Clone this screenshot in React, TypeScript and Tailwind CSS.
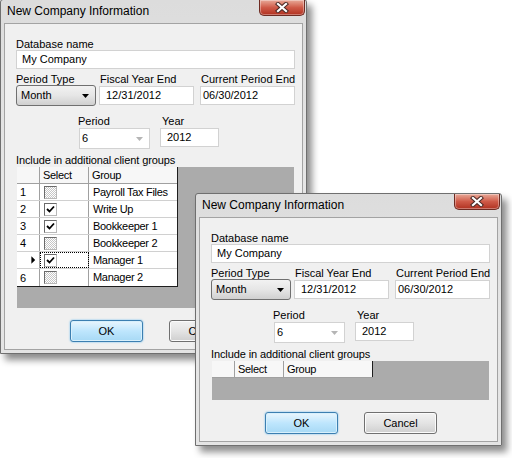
import React from "react";

type Row = { n: string; checked: boolean; group: string; current?: boolean };

const rows: Row[] = [
  { n: "1", checked: false, group: "Payroll Tax Files" },
  { n: "2", checked: true, group: "Write Up" },
  { n: "3", checked: true, group: "Bookkeeper 1" },
  { n: "4", checked: false, group: "Bookkeeper 2" },
  { n: "", checked: true, group: "Manager 1", current: true },
  { n: "6", checked: false, group: "Manager 2" },
];

function CloseButton() {
  return (
    <div className="w-[46px] h-[16px] rounded-b-[5px] border border-t-0 border-[#6e2b22] bg-gradient-to-b from-[#e7a999] via-[#cf5a48] to-[#b0301f] flex items-center justify-center shadow-[inset_0_0_0_1px_rgba(255,255,255,0.35)]">
      <svg width="14" height="11" viewBox="0 0 14 11">
        <path d="M3 2 L11 9 M11 2 L3 9" stroke="#4a2a26" strokeWidth="4.2" strokeLinecap="square" />
        <path d="M3 2 L11 9 M11 2 L3 9" stroke="#ffffff" strokeWidth="2.2" strokeLinecap="square" />
      </svg>
    </div>
  );
}

function Checkbox({ checked }: { checked: boolean }) {
  return (
    <div
      className={
        "w-[13px] h-[13px] border border-t-[#6a6a6a] border-l-[#6a6a6a] border-b-[#b8b8b8] border-r-[#b8b8b8] flex items-center justify-center " +
        (checked
          ? "bg-white"
          : "bg-[repeating-conic-gradient(#c6c6c6_0_25%,#ffffff_0_50%)] bg-[length:2px_2px]")
      }
    >
      {checked && (
        <svg width="9" height="9" viewBox="0 0 9 9">
          <path d="M1 4 L3.5 6.5 L8 1.5" stroke="#000" strokeWidth="1.8" fill="none" />
        </svg>
      )}
    </div>
  );
}

function TextBox({ w, pl, value }: { w: string; pl: string; value: string }) {
  return (
    <div className={`${w} ${pl} h-[19px] bg-white border border-[#d2d2d2] flex items-center text-black whitespace-nowrap`}>
      {value}
    </div>
  );
}

function Grid({ tall }: { tall: boolean }) {
  return (
    <div className={`mt-px ml-px w-[277px] bg-[#ababab] ${tall ? "h-[141px]" : "h-[39px]"}`}>
      <div className={`w-[161px] whitespace-nowrap tracking-[-0.3px] ${tall ? "border-r border-b border-[#1e1e1e]" : ""}`}>
        <div className="flex h-[17px] bg-[#f7f7f7] border-b border-[#a0a0a0]">
          <div className="w-[23px] border-r border-[#a0a0a0]" />
          <div className="w-[49px] border-r border-[#a0a0a0] pl-[3px] leading-[16px]">Select</div>
          <div className={`flex-1 pl-[3px] leading-[16px] ${tall ? "" : "border-r border-[#1e1e1e]"}`}>Group</div>
        </div>
        {tall &&
          rows.map((r, i) => (
            <div key={i} className="flex h-[17px] bg-white border-b border-[#d0d0d0] last:border-b-0">
              <div className="w-[23px] border-r border-[#a0a0a0] pl-[3px] leading-[16px] flex items-center">
                {r.current ? (
                  <svg width="20" height="16" viewBox="0 0 20 16">
                    <path d="M12 4 L16 8 L12 12 Z" fill="#000" />
                  </svg>
                ) : (
                  r.n
                )}
              </div>
              <div
                className={`w-[49px] border-r border-[#a0a0a0] pl-[4px] flex items-center ${
                  r.current ? "outline outline-1 outline-dotted outline-black -outline-offset-1" : ""
                }`}
              >
                <Checkbox checked={r.checked} />
              </div>
              <div className="flex-1 pl-[4px] leading-[16px]">{r.group}</div>
            </div>
          ))}
      </div>
    </div>
  );
}

function Button({ label, primary }: { label: string; primary?: boolean }) {
  return (
    <div
      className={
        "w-[73px] h-[22px] rounded-[3px] flex items-center justify-center text-black border " +
        (primary
          ? "border-[#3c7fb1] bg-gradient-to-b from-[#eaf6fd] via-[#bee6fd] to-[#a7d9f5] shadow-[0_0_2px_#5fb8ee,inset_0_0_0_1px_#d8f0fc]"
          : "border-[#707070] bg-gradient-to-b from-[#f2f2f2] via-[#e4e4e4] to-[#cfcfcf] shadow-[inset_0_0_0_1px_#fbfbfb]")
      }
    >
      {label}
    </div>
  );
}

function CompanyWindow({ className, tall }: { className: string; tall: boolean }) {
  return (
    <div
      className={`absolute w-[307px] border border-[#6f6f6f] rounded-t-[3px] bg-gradient-to-b from-[#dcdcdc] via-[#e6e6e6] to-[#e4e4e4] shadow-[5px_6px_7px_rgba(0,0,0,0.45)] ${className}`}
    >
      <div className="h-[23px] flex justify-between items-start pl-[6px] pr-px">
        <div className="pt-[4px] text-[12px] leading-[14px] text-black whitespace-nowrap">New Company Information</div>
        <CloseButton />
      </div>
      <div className="mx-[3px] mb-[3px] border border-[#a3a3a3] bg-[#f0f0f0] pl-[11px] pt-[14px] pb-[7px] text-[11px] text-black whitespace-nowrap">
        <div className="h-[12px] leading-[12px]">Database name</div>
        <TextBox w="w-[279px]" pl="pl-[5px]" value="My Company" />

        <div className="flex mt-[4px]">
          <div className="w-[80px] mr-[3px]">
            <div className="h-[12px] leading-[12px]">Period Type</div>
            <div className="h-[21px] rounded-[3px] border border-[#707070] bg-gradient-to-b from-[#f2f2f2] via-[#e6e6e6] to-[#d0d0d0] flex items-center justify-between pl-[4px] pr-[6px]">
              <span>Month</span>
              <svg width="7" height="4" viewBox="0 0 7 4">
                <path d="M0 0 L7 0 L3.5 4 Z" fill="#000" />
              </svg>
            </div>
          </div>
          <div className="w-[95px] mr-[6px]">
            <div className="h-[12px] leading-[12px] pl-px">Fiscal Year End</div>
            <div className="mt-px">
              <TextBox w="w-[95px]" pl="pl-[6px]" value="12/31/2012" />
            </div>
          </div>
          <div className="w-[95px]">
            <div className="h-[12px] leading-[12px] pl-px">Current Period End</div>
            <div className="mt-px">
              <TextBox w="w-[95px]" pl="pl-[2px]" value="06/30/2012" />
            </div>
          </div>
        </div>

        <div className="flex mt-[9px] ml-[63px]">
          <div className="w-[71px] mr-[10px]">
            <div className="h-[12px] leading-[12px] -ml-px">Period</div>
            <div className="mt-px h-[21px] bg-white border border-[#d2d2d2] flex items-center justify-between pl-[2px] pr-[6px]">
              <span>6</span>
              <svg width="7" height="4" viewBox="0 0 7 4">
                <path d="M0 0 L7 0 L3.5 4 Z" fill="#b5b5b5" />
              </svg>
            </div>
          </div>
          <div className="w-[59px]">
            <div className="h-[12px] leading-[12px] pl-[2px]">Year</div>
            <div className="mt-px">
              <TextBox w="w-[59px]" pl="pl-[6px]" value="2012" />
            </div>
          </div>
        </div>

        <div className="mt-[5px] h-[12px] leading-[12px] tracking-[-0.1px]">Include in additional client groups</div>
        <Grid tall={tall} />

        <div className="mt-[12px] flex justify-center gap-[26px] pr-[6px]">
          <Button label="OK" primary />
          <Button label="Cancel" />
        </div>
      </div>
    </div>
  );
}

export default function App() {
  return (
    <div className="relative w-[512px] h-[458px] bg-white overflow-hidden font-['Liberation_Sans',Arial,sans-serif]">
      <CompanyWindow className="left-0 top-[-1px]" tall={true} />
      <CompanyWindow className="left-[195px] top-[193px]" tall={false} />
    </div>
  );
}
